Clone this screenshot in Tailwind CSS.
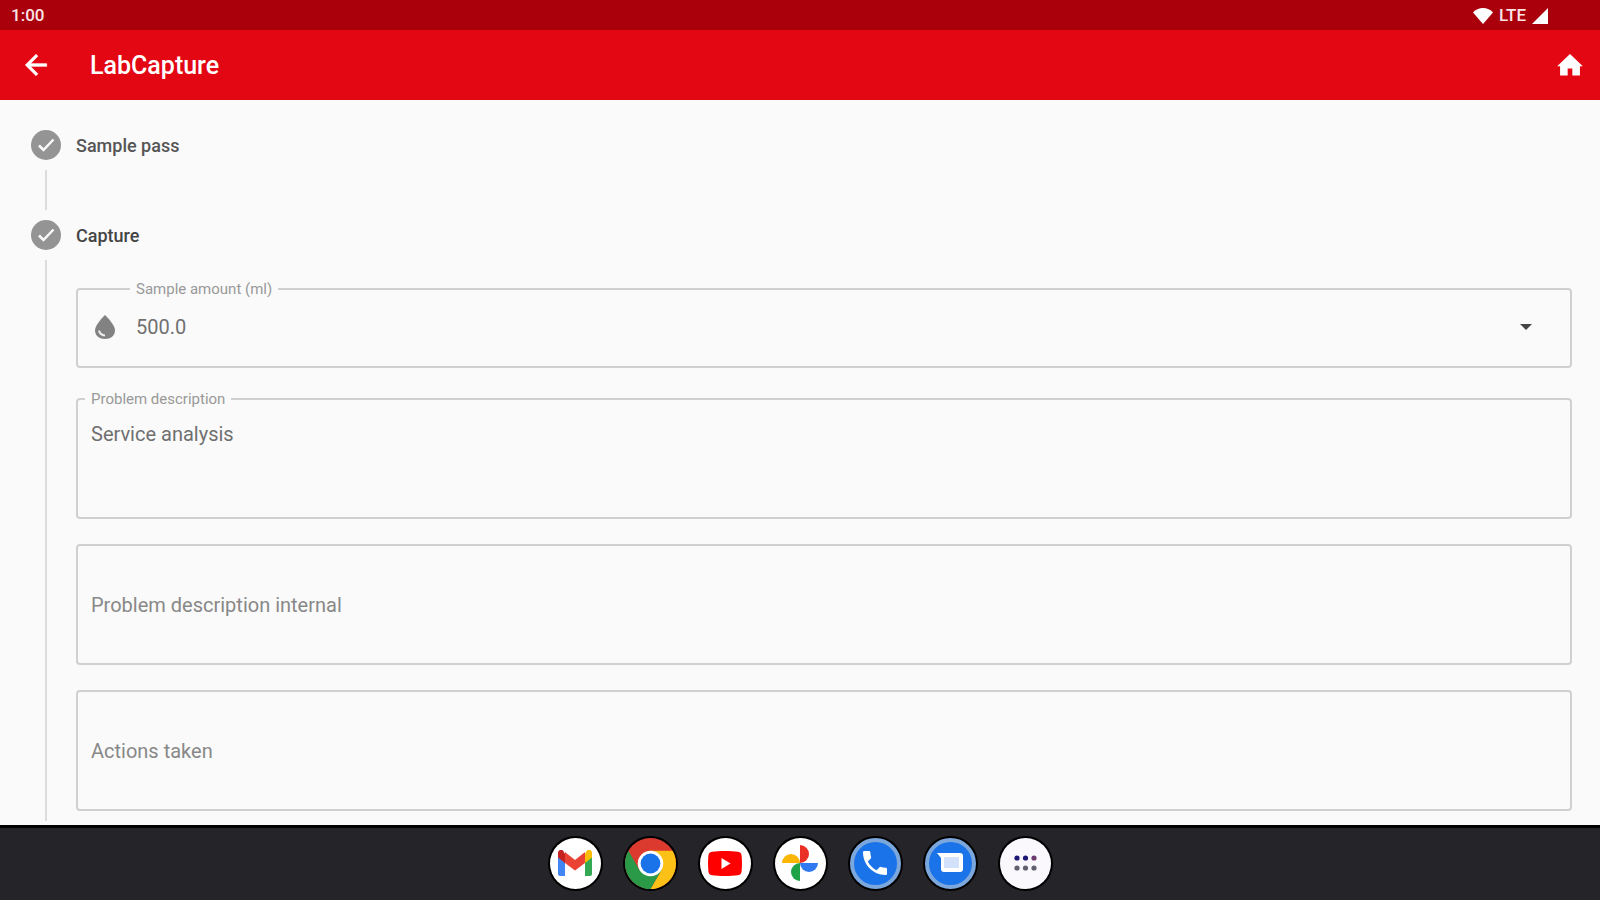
<!DOCTYPE html>
<html lang="en">
<head>
  <meta charset="UTF-8" />
  <meta name="viewport" content="width=device-width, initial-scale=1" />
  <title>LabCapture</title>
  <script src="https://cdn.jsdelivr.net/npm/@tailwindcss/browser@4"></script>
</head>
<body class="h-screen flex flex-col overflow-hidden bg-[#fafafa] font-['Roboto',sans-serif]">

  <!-- Status bar -->
  <div class="h-[30px] shrink-0 flex items-center justify-between pt-0.5 pl-[11px] pr-[52px] bg-[#a9000c] text-[#fbe4e6] text-[17px] font-medium">
    <span>1:00</span>
    <div class="flex items-center gap-1.5">
      <svg class="w-5 h-4" viewBox="0 0 20 16" fill="#fff"><path d="M10 16 0 4.500C2.500 1.500 6 0 10 0s7.500 1.500 10 4.500z" /></svg>
      <span>LTE</span>
      <svg class="size-4" viewBox="0 0 16 16" fill="#fff"><path d="M16 0v16H0z" /></svg>
    </div>
  </div>

  <!-- App bar -->
  <header class="h-[70px] shrink-0 flex items-center pl-5 pr-4 bg-[#e30613] text-white">
    <button type="button" aria-label="Back">
      <svg class="size-8" viewBox="0 0 24 24" fill="currentColor"><path d="M20 11H7.830l5.590-5.590L12 4l-8 8 8 8 1.410-1.410L7.830 13H20z" stroke="currentColor" stroke-width=".5" /></svg>
    </button>
    <h1 class="ml-[38px] pt-0.5 text-[25px] font-medium">LabCapture</h1>
    <button type="button" aria-label="Home" class="ml-auto">
      <svg class="size-7" viewBox="0 0 24 24" fill="currentColor"><path d="M10 21v-6h4v6h6.500v-8H23L12 2.500 1 13h2.500v8z" /></svg>
    </button>
  </header>

  <!-- Stepper -->
  <main class="flex-1 min-h-0 flex flex-col pt-[30px] pl-[30px] pr-7 overflow-hidden">
    <section class="flex gap-[15px]">
      <div class="w-[31px] shrink-0 flex flex-col items-center gap-2.5 pb-2.5">
        <svg class="size-[30px]" viewBox="0 0 30 30"><circle cx="15" cy="15" r="15" fill="#949494" /><path d="m8 15.500 4.500 4.500L22.500 9.500" fill="none" stroke="#fafafa" stroke-width="2.500" /></svg>
        <div class="w-0.5 h-10 bg-[#dcdcdc]"></div>
      </div>
      <h2 class="text-lg leading-[31px] font-medium text-[#555]">Sample pass</h2>
    </section>

    <section class="flex gap-[15px]">
      <div class="w-[31px] shrink-0 flex flex-col items-center gap-2.5">
        <svg class="size-[30px]" viewBox="0 0 30 30"><circle cx="15" cy="15" r="15" fill="#949494" /><path d="m8 15.500 4.500 4.500L22.500 9.500" fill="none" stroke="#fafafa" stroke-width="2.500" /></svg>
        <div class="w-0.5 flex-1 bg-[#dcdcdc]"></div>
      </div>
      <form class="flex-1 min-w-0 pb-2.5">
        <h2 class="text-lg leading-[31px] font-medium text-[#444]">Capture</h2>

        <fieldset class="mt-[30px] h-[87px] min-w-0 border-2 border-[#d0d0d0] rounded-sm">
          <legend class="ml-[52px] px-1.5 text-[15px] leading-4 text-[#999]"><label for="amount">Sample amount (ml)</label></legend>
          <div class="flex items-center h-[60px] pl-[15px] pr-[38px]">
            <svg class="size-6 shrink-0" viewBox="0 0 24 24"><path d="M12 0S2 9.500 2 15.500C2 20.500 6.500 24 12 24s10-3.500 10-8.500C22 9.500 12 0 12 0z" fill="#828282" /><path d="M6 15.500c.5 3 2.500 4.500 6 5" fill="none" stroke="#ececec" stroke-width="2" /></svg>
            <select id="amount" class="flex-1 min-w-0 h-full pl-[19px] appearance-none outline-none bg-transparent text-xl text-[#707070]">
              <option>500.0</option>
            </select>
            <svg class="w-3 h-1.5 shrink-0 pointer-events-none" viewBox="0 0 12 6" fill="#444"><path d="M0 0h12L6 6z" /></svg>
          </div>
        </fieldset>

        <fieldset class="mt-[23px] h-32 min-w-0 border-2 border-[#d0d0d0] rounded-sm">
          <legend class="ml-[7px] px-1.5 text-[15px] leading-4 text-[#999]"><label for="problem">Problem description</label></legend>
          <textarea id="problem" class="block w-full h-[104px] pt-[15px] px-[13px] resize-none outline-none text-xl leading-6 text-[#707070]">Service analysis</textarea>
        </fieldset>

        <textarea aria-label="Problem description internal" placeholder="Problem description internal" class="block w-full h-[121px] mt-[25px] pt-[47px] px-[13px] border-2 border-[#d0d0d0] rounded-sm resize-none outline-none text-xl leading-6 text-[#707070] placeholder:text-[#888]"></textarea>

        <textarea aria-label="Actions taken" placeholder="Actions taken" class="block w-full h-[121px] mt-[25px] pt-[47px] px-[13px] border-2 border-[#d0d0d0] rounded-sm resize-none outline-none text-xl leading-6 text-[#707070] placeholder:text-[#888]"></textarea>
      </form>
    </section>
  </main>

  <!-- Dock -->
  <nav class="h-[75px] shrink-0 flex items-center justify-center gap-6 pb-0.5 border-t-3 border-black bg-[#252529]">
    <button type="button" aria-label="Gmail" class="size-[51px] rounded-full bg-white ring-2 ring-black flex items-center justify-center">
      <svg class="w-[34px] h-[26px]" viewBox="0 0 34 26">
        <path d="M0 3v21a2 2 0 0 0 2 2h5V9z" fill="#4285f4" />
        <path d="M34 3v21a2 2 0 0 1-2 2h-5V9z" fill="#34a853" />
        <path d="M27 4v9l7-5.500V3c0-3-3-4-5-2.500z" fill="#fbbc04" />
        <path d="M7 4v9L0 7.500V3C0 0 3-1 5 .5z" fill="#c5221f" />
        <path d="M7 13V2l10 8 10-8v11l-10 7.500z" fill="#ea4335" />
      </svg>
    </button>
    <button type="button" aria-label="Chrome" class="size-[51px] rounded-full ring-2 ring-black">
      <svg class="size-[51px]" viewBox="-24 -24 48 48">
        <circle r="24" fill="#dc3a2e" />
        <path d="M0-12H20.780A24 24 0 0 1 0 24L10.390 6z" fill="#fbc116" />
        <path d="M-20.780-12A24 24 0 0 0 0 24L10.390 6H-10.390z" fill="#2a9a48" />
        <circle r="12" fill="#fff" />
        <circle r="9.300" fill="#1a73e8" />
      </svg>
    </button>
    <button type="button" aria-label="YouTube" class="size-[51px] rounded-full bg-white ring-2 ring-black flex items-center justify-center">
      <svg class="w-[34px] h-[25px]" viewBox="0 0 34 25"><path d="M4 .7C11-.2 23-.2 30 .7c2.500.3 3.300 1.500 3.600 4 .5 5 .5 10.600 0 15.600-.3 2.500-1.100 3.700-3.600 4-7 .9-19 .9-26 0-2.500-.3-3.300-1.500-3.600-4-.5-5-.5-10.600 0-15.600C.7 2.200 1.500 1 4 .7z" fill="#f00" /><path d="M13.500 7v11l9-5.500z" fill="#fff" /></svg>
    </button>
    <button type="button" aria-label="Photos" class="size-[51px] rounded-full bg-white ring-2 ring-black flex items-center justify-center">
      <svg class="size-9" viewBox="0 0 36 36">
        <path d="M18 0a9 9 0 0 1 0 18z" fill="#ea2f25" />
        <path d="M36 18a9 9 0 0 1-18 0z" fill="#3079f0" />
        <path d="M18 36a9 9 0 0 1 0-18z" fill="#1ea446" />
        <path d="M0 18a9 9 0 0 1 18 0z" fill="#fbb604" />
      </svg>
    </button>
    <button type="button" aria-label="Phone" class="size-[51px] rounded-full bg-[#1a73e8] border-4 border-[#7ba7dc] ring-2 ring-black flex items-center justify-center">
      <svg class="size-8" viewBox="0 0 24 24" fill="#fff"><path d="M6.620 10.790c1.440 2.830 3.760 5.140 6.590 6.590l2.200-2.200c.27-.27.67-.36 1.020-.24 1.120.37 2.330.57 3.570.57.55 0 1 .45 1 1V20c0 .55-.45 1-1 1C10.610 21 3 13.390 3 4c0-.55.45-1 1-1h3.500c.55 0 1 .45 1 1 0 1.250.2 2.450.57 3.570.11.35.03.74-.25 1.020z" /></svg>
    </button>
    <button type="button" aria-label="Messages" class="size-[51px] rounded-full bg-[#1a73e8] border-4 border-[#7ba7dc] ring-2 ring-black flex items-center justify-center">
      <svg class="w-[26px] h-5" viewBox="0 0 26 20"><path d="M0 0h23a3 3 0 0 1 3 3v13a3 3 0 0 1-3 3H7a3 3 0 0 1-3-3V5z" fill="#fff" /><rect x="7" y="4" width="15" height="11" fill="#d3e1fa" /></svg>
    </button>
    <button type="button" aria-label="All apps" class="size-[51px] rounded-full bg-[#faf8fd] ring-2 ring-black flex items-center justify-center">
      <svg class="w-[23px] h-4" viewBox="0 0 23 16">
        <g fill="#1c1674"><circle cx="3" cy="3" r="2.600" /><circle cx="11.500" cy="3" r="2.600" /></g>
        <circle cx="20" cy="3" r="2.600" fill="#6b3a6e" />
        <g fill="#62626e"><circle cx="3" cy="13" r="2.600" /><circle cx="11.500" cy="13" r="2.600" /><circle cx="20" cy="13" r="2.600" /></g>
      </svg>
    </button>
  </nav>
</body>
</html>
